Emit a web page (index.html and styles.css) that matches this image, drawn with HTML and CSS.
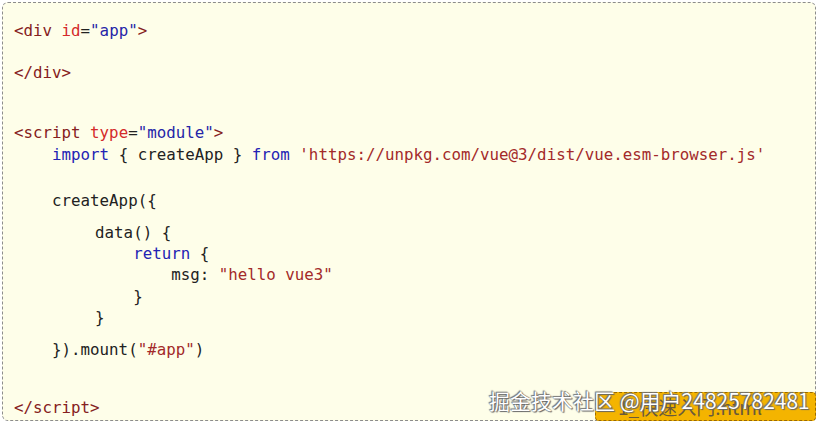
FILE: index.html
```html
<!DOCTYPE html>
<html lang="zh">
<head>
<meta charset="utf-8">
<title>code</title>
<link rel="stylesheet" href="styles.css">
</head>
<body>
<div class="page">
  <div class="code">
    <div class="ln"><span class="tag">&lt;div</span> <span class="attr">id</span>=<span class="val">"app"</span><span class="tag">&gt;</span></div>
    <div class="ln g21"><span class="tag">&lt;/div&gt;</span></div>
    <div class="ln g39"><span class="tag">&lt;script</span> <span class="attr">type</span>=<span class="val">"module"</span><span class="tag">&gt;</span></div>
    <div class="ln g1">    <span class="kw">import</span> { createApp } <span class="kw">from</span> <span class="str">'https://unpkg.com/vue@3/dist/vue.esm-browser.js'</span></div>
    <div class="ln g25">    createApp({</div>
    <div class="ln g11 inner">        data() {</div>
    <div class="ln inner">            <span class="kw">return</span> {</div>
    <div class="ln inner">                msg: <span class="str">"hello vue3"</span></div>
    <div class="ln g1 inner">            }</div>
    <div class="ln inner">        }</div>
    <div class="ln g11">    }).mount(<span class="str">"#app"</span>)</div>
    <div class="ln g37"><span class="tag">&lt;/script&gt;</span></div>
  </div>
  <div class="tab">1_快速入门.html</div>
  <div class="wm">掘金技术社区 @用户24825782481</div>
</div>
</body>
</html>
```
FILE: styles.css
```css
* { box-sizing: border-box; }
html, body { margin: 0; padding: 0; background: #ffffff; }
.page {
  position: relative;
  width: 825px;
  height: 427px;
  padding: 2px 9px 6px 2px;
}
.code {
  height: 419px;
  background: #fefee9;
  border: 1px dashed #8c8c8c;
  border-radius: 6px;
  padding: 17px 10px 0 11px;
  font-family: "DejaVu Sans Mono", "Liberation Mono", monospace;
  font-size: 15.8px;
  color: #222222;
}
.ln {
  white-space: pre;
  line-height: 21px;
  height: 21px;
}
.inner { padding-left: 5px; }
.g1 { margin-top: 1px; }
.g11 { margin-top: 11px; }
.g21 { margin-top: 21px; }
.g25 { margin-top: 25px; }
.g37 { margin-top: 37px; }
.g39 { margin-top: 39px; }
.tag { color: #852020; }
.attr { color: #d42a2a; }
.val { color: #2525a8; }
.kw { color: #2323b4; }
.str { color: #a32a2a; }
.tab {
  position: absolute;
  left: 595px;
  top: 392px;
  width: 221px;
  height: 29px;
  background: #f4b400;
  border: 1px dashed #9a6a00;
  border-radius: 4px;
  padding-left: 22px;
  font-family: "Noto Sans CJK SC", "DejaVu Sans", sans-serif;
  font-size: 19px;
  line-height: 27px;
  color: #6a5a3a;
}
.wm {
  position: absolute;
  left: 489px;
  top: 386px;
  font-family: "Noto Sans CJK SC", "DejaVu Sans", sans-serif;
  font-size: 21px;
  line-height: 28px;
  color: #ffffff;
  text-shadow: 0 0 1px #555, 1px 1px 1px #666, -1px -1px 1px #777;
  white-space: nowrap;
}
```
